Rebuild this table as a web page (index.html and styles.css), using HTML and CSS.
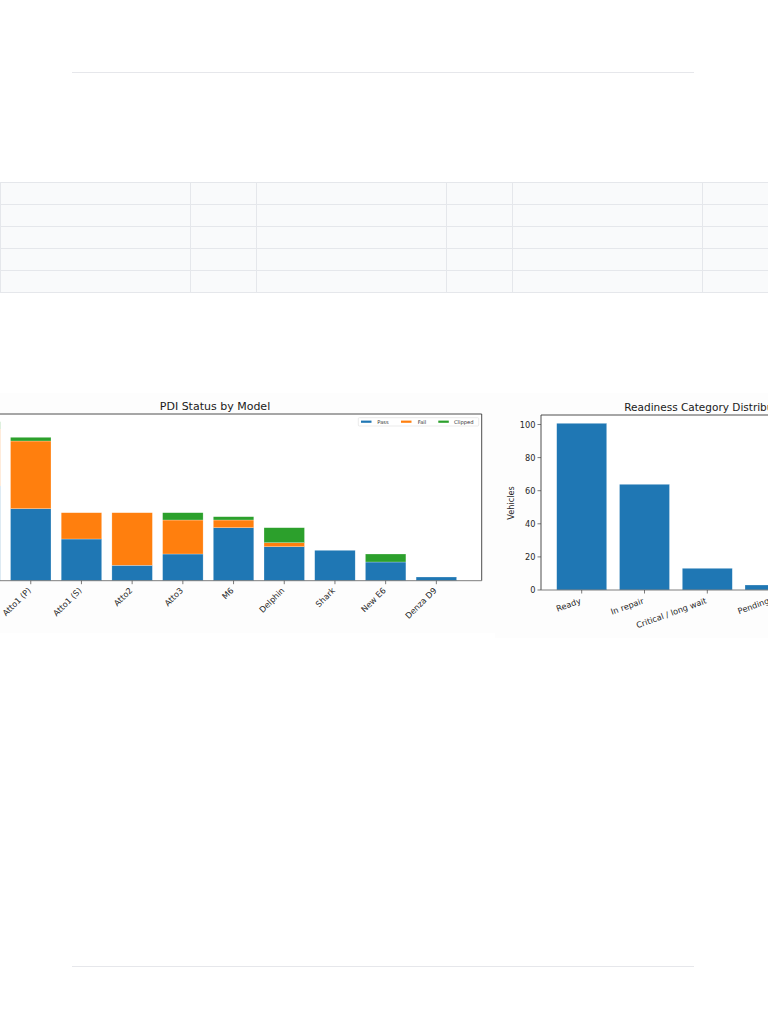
FILE: index.html
```html
<!DOCTYPE html>
<html lang="en">
<head>
<meta charset="utf-8">
<title>PDI Report</title>
<link rel="stylesheet" href="styles.css">
</head>
<body>
<header class="page-head"></header>

<table class="grid">
  <colgroup>
    <col class="c-wide"><col class="c-narrow"><col class="c-wide"><col class="c-narrow"><col class="c-wide"><col class="c-narrow">
  </colgroup>
  <tbody>
    <tr><td></td><td></td><td></td><td></td><td></td><td></td></tr>
    <tr><td></td><td></td><td></td><td></td><td></td><td></td></tr>
    <tr><td></td><td></td><td></td><td></td><td></td><td></td></tr>
    <tr><td></td><td></td><td></td><td></td><td></td><td></td></tr>
    <tr><td></td><td></td><td></td><td></td><td></td><td></td></tr>
  </tbody>
</table>

<section class="charts">
  <svg class="chart chart-left" width="495" height="240" viewBox="0 0 495 240">
    <rect class="fig-bg" x="0" y="0" width="495" height="240"/>
    <rect class="ax-bg" x="-60" y="21" width="541.7" height="166.7"/>
    <text class="title" x="215" y="17" text-anchor="middle">PDI Status by Model</text>
    <g class="bars">
      <rect class="pass" x="-40.5" y="93" width="40.7" height="94.7"/>
      <rect class="fail" x="-40.5" y="36" width="40.7" height="57"/>
      <rect class="clip" x="-40.5" y="28.7" width="40.7" height="7.3"/>

      <rect class="pass" x="10.5" y="115.7" width="40.5" height="72"/>
      <rect class="fail" x="10.5" y="48" width="40.5" height="67.7"/>
      <rect class="clip" x="10.5" y="44.3" width="40.5" height="3.7"/>

      <rect class="pass" x="61.2" y="146" width="40.5" height="41.7"/>
      <rect class="fail" x="61.2" y="119.7" width="40.5" height="26.3"/>

      <rect class="pass" x="111.9" y="172.3" width="40.5" height="15.4"/>
      <rect class="fail" x="111.9" y="119.7" width="40.5" height="52.6"/>

      <rect class="pass" x="162.6" y="161" width="40.5" height="26.7"/>
      <rect class="fail" x="162.6" y="127" width="40.5" height="34"/>
      <rect class="clip" x="162.6" y="119.7" width="40.5" height="7.3"/>

      <rect class="pass" x="213.3" y="134.7" width="40.5" height="53"/>
      <rect class="fail" x="213.3" y="127" width="40.5" height="7.7"/>
      <rect class="clip" x="213.3" y="123.7" width="40.5" height="3.3"/>

      <rect class="pass" x="264" y="153.7" width="40.5" height="34"/>
      <rect class="fail" x="264" y="149.7" width="40.5" height="4"/>
      <rect class="clip" x="264" y="134.7" width="40.5" height="15"/>

      <rect class="pass" x="314.7" y="157.3" width="40.5" height="30.4"/>

      <rect class="pass" x="365.4" y="169" width="40.5" height="18.7"/>
      <rect class="clip" x="365.4" y="161" width="40.5" height="8"/>

      <rect class="pass" x="416.1" y="184" width="40.5" height="3.7"/>
    </g>
    <g class="spines">
      <line x1="-60" y1="21" x2="481.7" y2="21"/>
      <line x1="481.7" y1="21" x2="481.7" y2="187.7"/>
      <line class="base" x1="-60" y1="187.7" x2="481.7" y2="187.7"/>
    </g>
    <g class="ticks">
      <line x1="30.75" y1="187.7" x2="30.75" y2="191.2"/>
      <line x1="81.45" y1="187.7" x2="81.45" y2="191.2"/>
      <line x1="132.15" y1="187.7" x2="132.15" y2="191.2"/>
      <line x1="182.85" y1="187.7" x2="182.85" y2="191.2"/>
      <line x1="233.55" y1="187.7" x2="233.55" y2="191.2"/>
      <line x1="284.25" y1="187.7" x2="284.25" y2="191.2"/>
      <line x1="334.95" y1="187.7" x2="334.95" y2="191.2"/>
      <line x1="385.65" y1="187.7" x2="385.65" y2="191.2"/>
      <line x1="436.35" y1="187.7" x2="436.35" y2="191.2"/>
    </g>
    <g class="xlabels" text-anchor="end">
      <text transform="translate(31.5,198) rotate(-45)">Atto1 (P)</text>
      <text transform="translate(82.2,198) rotate(-45)">Atto1 (S)</text>
      <text transform="translate(132.9,198) rotate(-45)">Atto2</text>
      <text transform="translate(183.6,198) rotate(-45)">Atto3</text>
      <text transform="translate(234.3,198) rotate(-45)">M6</text>
      <text transform="translate(285,198) rotate(-45)">Delphin</text>
      <text transform="translate(335.7,198) rotate(-45)">Shark</text>
      <text transform="translate(386.4,198) rotate(-45)">New E6</text>
      <text transform="translate(437.1,198) rotate(-45)">Denza D9</text>
    </g>
    <g class="legend">
      <rect class="legend-box" x="358.3" y="24.7" width="120.4" height="8.3" rx="1"/>
      <rect class="pass" x="361" y="27.6" width="10.5" height="2.2"/>
      <text x="377.3" y="30.7">Pass</text>
      <rect class="fail" x="401" y="27.6" width="10.5" height="2.2"/>
      <text x="417.7" y="30.7">Fail</text>
      <rect class="clip" x="438.3" y="27.6" width="10.5" height="2.2"/>
      <text x="454" y="30.7">Clipped</text>
    </g>
  </svg>

  <svg class="chart chart-right" width="273" height="245" viewBox="0 0 273 245">
    <rect class="fig-bg" x="0" y="0" width="273" height="245"/>
    <rect class="ax-bg" x="46" y="22" width="240" height="175"/>
    <text class="title title-sm" x="129.3" y="17.5">Readiness Category Distribution</text>
    <g class="bars">
      <rect class="pass" x="61.7" y="30.3" width="50" height="166.7"/>
      <rect class="pass" x="124.5" y="91.3" width="50" height="105.7"/>
      <rect class="pass" x="187.3" y="175.3" width="50" height="21.7"/>
      <rect class="pass" x="250" y="192" width="50" height="5"/>
    </g>
    <g class="spines">
      <line x1="46" y1="22" x2="300" y2="22"/>
      <line x1="46" y1="22" x2="46" y2="197"/>
      <line class="base" x1="46" y1="197" x2="300" y2="197"/>
    </g>
    <g class="ticks">
      <line x1="42.5" y1="197" x2="46" y2="197"/>
      <line x1="42.5" y1="163.9" x2="46" y2="163.9"/>
      <line x1="42.5" y1="130.8" x2="46" y2="130.8"/>
      <line x1="42.5" y1="97.7" x2="46" y2="97.7"/>
      <line x1="42.5" y1="64.6" x2="46" y2="64.6"/>
      <line x1="42.5" y1="31.5" x2="46" y2="31.5"/>
      <line x1="86.7" y1="197" x2="86.7" y2="200.5"/>
      <line x1="149.5" y1="197" x2="149.5" y2="200.5"/>
      <line x1="212.3" y1="197" x2="212.3" y2="200.5"/>
      <line x1="275" y1="197" x2="275" y2="200.5"/>
    </g>
    <g class="ylabels" text-anchor="end">
      <text x="40.5" y="200">0</text>
      <text x="40.5" y="166.9">20</text>
      <text x="40.5" y="133.8">40</text>
      <text x="40.5" y="100.7">60</text>
      <text x="40.5" y="67.6">80</text>
      <text x="40.5" y="34.5">100</text>
    </g>
    <text class="ylabel" transform="translate(19,110) rotate(-90)" text-anchor="middle">Vehicles</text>
    <g class="xlabels" text-anchor="end">
      <text transform="translate(86.5,210) rotate(-20)">Ready</text>
      <text transform="translate(149.3,210) rotate(-20)">In repair</text>
      <text transform="translate(212.1,210) rotate(-20)">Critical / long wait</text>
      <text transform="translate(274.8,210) rotate(-20)">Pending</text>
    </g>
  </svg>
</section>

<footer class="page-foot"></footer>
</body>
</html>
```

FILE: styles.css
```css
html, body {
  margin: 0;
  padding: 0;
  background: #ffffff;
}

body {
  font-family: "DejaVu Sans", "Liberation Sans", sans-serif;
  width: 768px;
  overflow: hidden;
}

.page-head {
  height: 72px;
  margin: 0 74px 0 72px;
  border-bottom: 1px solid #e6e7eb;
}

.grid {
  margin-top: 109px;
  width: 768px;
  table-layout: fixed;
  border-collapse: collapse;
  background: #f9fafb;
}

.c-wide { width: 190px; }
.c-narrow { width: 66px; }

.grid td {
  height: 21px;
  padding: 0;
  border: 1px solid #e5e7eb;
}

.charts {
  margin-top: 100px;
  display: flex;
  align-items: flex-start;
  height: 240px;
}

.chart {
  display: block;
  flex: none;
  overflow: hidden;
}

.fig-bg { fill: #fdfdfd; }
.ax-bg { fill: #ffffff; }

.title {
  font-size: 11px;
  fill: #1a1a1a;
}

.title-sm {
  font-size: 10.5px;
}

.bars rect {
  stroke: #ffffff;
  stroke-width: 0.5;
  stroke-opacity: 0.5;
}

.pass { fill: #1f77b4; }
.fail { fill: #ff7f0e; }
.clip { fill: #2ca02c; }

.spines line {
  stroke: #3a3a3a;
  stroke-width: 0.9;
}

.spines .base {
  stroke: #6f6f6f;
}

.ticks line {
  stroke: #444444;
  stroke-width: 0.7;
}

.xlabels text,
.ylabels text,
.ylabel {
  font-size: 8.2px;
  fill: #262626;
}

.legend-box {
  fill: #ffffff;
  stroke: #d6d6d6;
  stroke-width: 0.5;
}

.legend text {
  font-size: 5.2px;
  fill: #333333;
}

.page-foot {
  margin: 333px 74px 0 72px;
  border-top: 1px solid #e6e7eb;
  height: 57px;
}
```
